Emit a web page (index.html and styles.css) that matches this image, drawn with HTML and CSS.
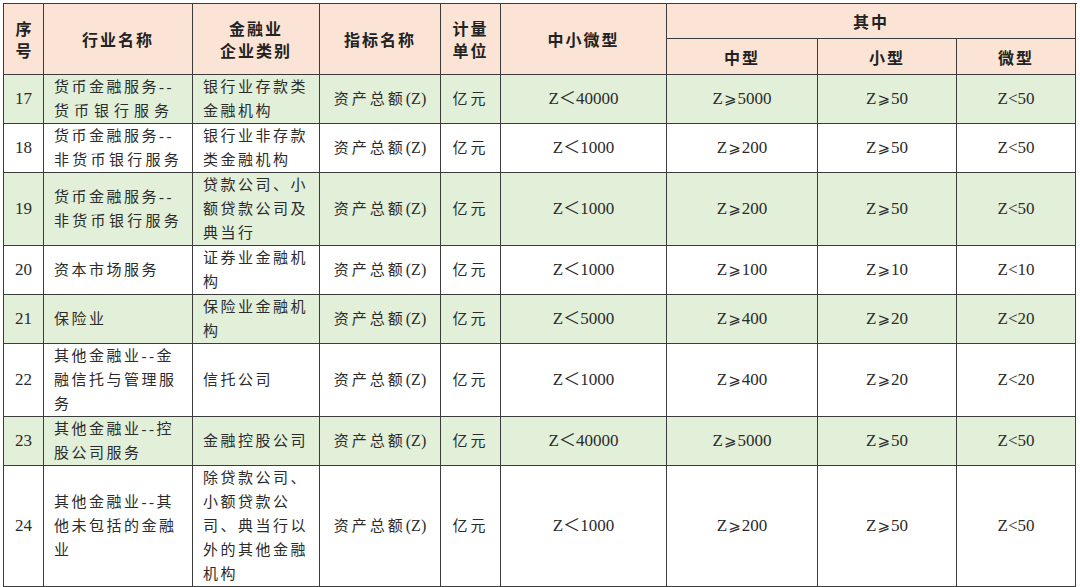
FILE: index.html
```html
<!DOCTYPE html>
<html lang="zh-CN">
<head>
<meta charset="utf-8">
<title>金融业企业划型标准</title>
<link rel="stylesheet" href="styles.css">
</head>
<body>
<div class="wrap">
<table class="grid">
  <colgroup>
    <col class="c1"><col class="c2"><col class="c3"><col class="c4"><col class="c5">
    <col class="c6"><col class="c7"><col class="c8"><col class="c9">
  </colgroup>
  <thead>
    <tr class="h1">
      <th rowspan="2" class="tight">序<br>号</th>
      <th rowspan="2">行业名称</th>
      <th rowspan="2">金融业<br>企业类别</th>
      <th rowspan="2">指标名称</th>
      <th rowspan="2">计量<br>单位</th>
      <th rowspan="2">中小微型</th>
      <th colspan="4">其中</th>
    </tr>
    <tr class="h2">
      <th>中型</th>
      <th>小型</th>
      <th>微型</th>
    </tr>
  </thead>
  <tbody>
    <tr class="r2 green">
      <td class="num">17</td>
      <td class="txt">货币金融服务--<br><span class="w">货币银行服务</span></td>
      <td class="txt">银行业存款类<br>金融机构</td>
      <td class="mid">资产总额<span class="z">(Z)</span></td>
      <td class="mid">亿元</td>
      <td class="num">Z＜40000</td>
      <td class="num">Z<span class="ge">⩾</span>5000</td>
      <td class="num">Z<span class="ge">⩾</span>50</td>
      <td class="num">Z&lt;50</td>
    </tr>
    <tr class="r2">
      <td class="num">18</td>
      <td class="txt">货币金融服务--<br><span class="m">非货币银行服务</span></td>
      <td class="txt">银行业非存款<br>类金融机构</td>
      <td class="mid">资产总额<span class="z">(Z)</span></td>
      <td class="mid">亿元</td>
      <td class="num">Z＜1000</td>
      <td class="num">Z<span class="ge">⩾</span>200</td>
      <td class="num">Z<span class="ge">⩾</span>50</td>
      <td class="num">Z&lt;50</td>
    </tr>
    <tr class="r3 green">
      <td class="num">19</td>
      <td class="txt">货币金融服务--<br><span class="m">非货币银行服务</span></td>
      <td class="txt">贷款公司、小<br>额贷款公司及<br>典当行</td>
      <td class="mid">资产总额<span class="z">(Z)</span></td>
      <td class="mid">亿元</td>
      <td class="num">Z＜1000</td>
      <td class="num">Z<span class="ge">⩾</span>200</td>
      <td class="num">Z<span class="ge">⩾</span>50</td>
      <td class="num">Z&lt;50</td>
    </tr>
    <tr class="r2">
      <td class="num">20</td>
      <td class="txt">资本市场服务</td>
      <td class="txt">证券业金融机<br>构</td>
      <td class="mid">资产总额<span class="z">(Z)</span></td>
      <td class="mid">亿元</td>
      <td class="num">Z＜1000</td>
      <td class="num">Z<span class="ge">⩾</span>100</td>
      <td class="num">Z<span class="ge">⩾</span>10</td>
      <td class="num">Z&lt;10</td>
    </tr>
    <tr class="r2 green">
      <td class="num">21</td>
      <td class="txt">保险业</td>
      <td class="txt">保险业金融机<br>构</td>
      <td class="mid">资产总额<span class="z">(Z)</span></td>
      <td class="mid">亿元</td>
      <td class="num">Z＜5000</td>
      <td class="num">Z<span class="ge">⩾</span>400</td>
      <td class="num">Z<span class="ge">⩾</span>20</td>
      <td class="num">Z&lt;20</td>
    </tr>
    <tr class="r3">
      <td class="num">22</td>
      <td class="txt">其他金融业--金<br>融信托与管理服<br>务</td>
      <td class="txt">信托公司</td>
      <td class="mid">资产总额<span class="z">(Z)</span></td>
      <td class="mid">亿元</td>
      <td class="num">Z＜1000</td>
      <td class="num">Z<span class="ge">⩾</span>400</td>
      <td class="num">Z<span class="ge">⩾</span>20</td>
      <td class="num">Z&lt;20</td>
    </tr>
    <tr class="r2 green">
      <td class="num">23</td>
      <td class="txt">其他金融业--控<br>股公司服务</td>
      <td class="txt">金融控股公司</td>
      <td class="mid">资产总额<span class="z">(Z)</span></td>
      <td class="mid">亿元</td>
      <td class="num">Z＜40000</td>
      <td class="num">Z<span class="ge">⩾</span>5000</td>
      <td class="num">Z<span class="ge">⩾</span>50</td>
      <td class="num">Z&lt;50</td>
    </tr>
    <tr class="r5">
      <td class="num">24</td>
      <td class="txt">其他金融业--其<br>他未包括的金融<br>业</td>
      <td class="txt">除贷款公司、<br>小额贷款公<br>司、典当行以<br>外的其他金融<br>机构</td>
      <td class="mid">资产总额<span class="z">(Z)</span></td>
      <td class="mid">亿元</td>
      <td class="num">Z＜1000</td>
      <td class="num">Z<span class="ge">⩾</span>200</td>
      <td class="num">Z<span class="ge">⩾</span>50</td>
      <td class="num">Z&lt;50</td>
    </tr>
  </tbody>
</table>
</div>
</body>
</html>
```
FILE: styles.css
```css
html, body {
  margin: 0;
  padding: 0;
  background: #ffffff;
}

.wrap {
  padding: 3px 0 0 3px;
}

.grid {
  border-collapse: collapse;
  table-layout: fixed;
  width: 1072px;
  font-family: "Liberation Serif", "Noto Sans CJK SC", serif;
  color: #2b2b2b;
}

.c1 { width: 40px; }
.c2 { width: 149px; }
.c3 { width: 127px; }
.c4 { width: 121px; }
.c5 { width: 60px; }
.c6 { width: 166px; }
.c7 { width: 151px; }
.c8 { width: 139px; }
.c9 { width: 119px; }

.grid th,
.grid td {
  border: 1px solid #3c3c3c;
  padding: 0;
  vertical-align: middle;
  overflow: hidden;
  white-space: nowrap;
}

.grid th {
  background: #fbe4d5;
  font-family: "Noto Sans CJK SC", sans-serif;
  font-weight: 700;
  font-size: 16px;
  line-height: 22px;
  letter-spacing: 2px;
  text-align: center;
  color: #222222;
}

.grid th.tight {
  letter-spacing: 0;
}

.h1 { height: 35px; }
.h2 { height: 36px; }

.r2 { height: 49px; }
.r3 { height: 72px; }
.r5 { height: 121px; }

.green td {
  background: #e2efd9;
}

.grid td {
  font-size: 15px;
  line-height: 24px;
}

.grid td.num {
  font-size: 17px;
  text-align: center;
  letter-spacing: 0;
}

.grid td.mid {
  text-align: center;
  letter-spacing: 3px;
  font-size: 15px;
}

.grid td.mid .z {
  letter-spacing: 0;
  font-size: 16px;
}

.grid td.txt {
  text-align: left;
  padding-left: 10px;
  letter-spacing: 2.5px;
}

.ge {
  font-family: "DejaVu Sans", "Noto Sans CJK SC", sans-serif;
  font-size: 15px;
  padding: 0 1px;
}

.w { letter-spacing: 5px; }
.m { letter-spacing: 3.3px; }
```
